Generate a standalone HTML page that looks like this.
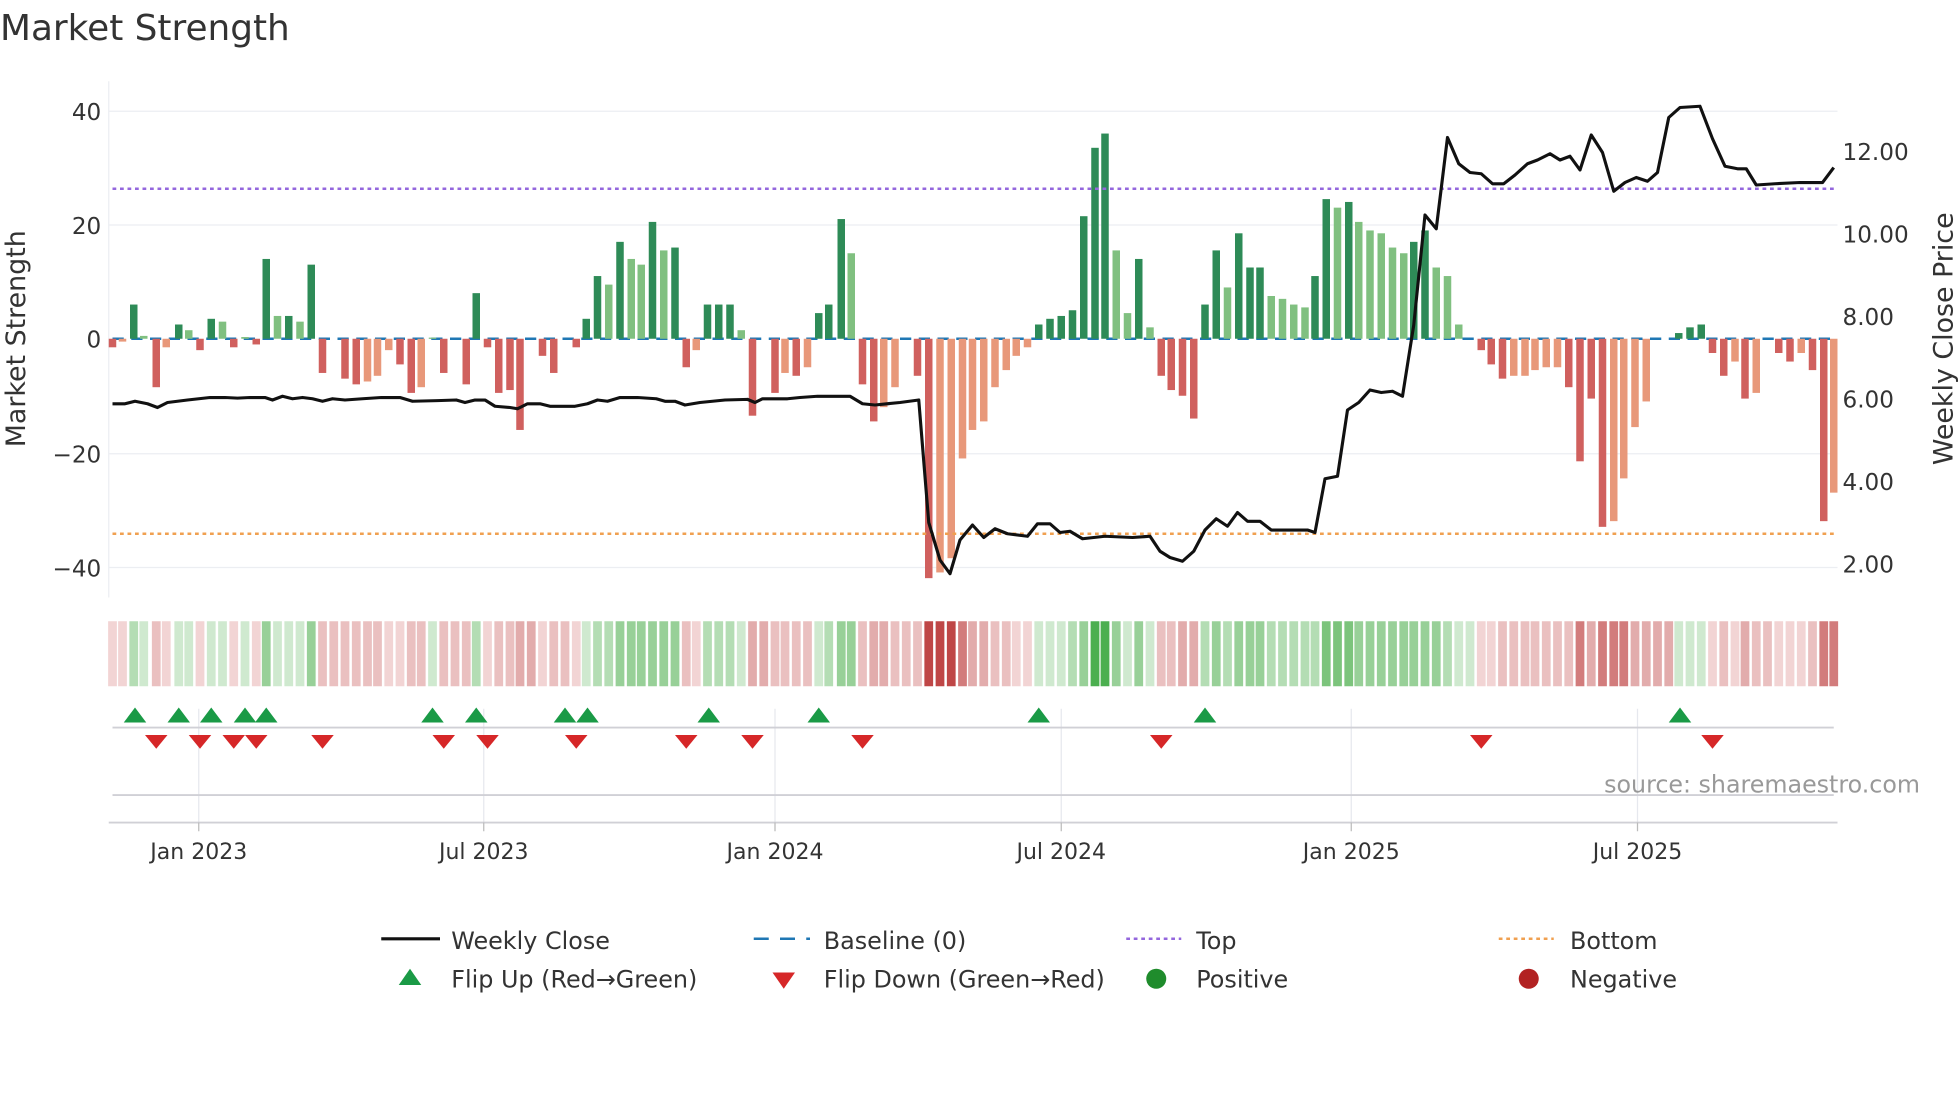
<!DOCTYPE html>
<html><head><meta charset="utf-8"><style>
html,body{margin:0;padding:0;background:#fff;width:1960px;height:1102px;overflow:hidden}
svg{display:block}
text{font-family:"DejaVu Sans","Liberation Sans",sans-serif;fill:#333}
</style></head><body>
<svg id="s" width="1960" height="1102" viewBox="0 0 1568 881.6" xmlns="http://www.w3.org/2000/svg">
<text x="0" y="32" font-size="28.7">Market Strength</text>
<g stroke="#eceef2" stroke-width="1">
<line x1="87" y1="89" x2="1470" y2="89"/><line x1="87" y1="180" x2="1470" y2="180"/>
<line x1="87" y1="363" x2="1470" y2="363"/><line x1="87" y1="454" x2="1470" y2="454"/>
<line x1="87" y1="65" x2="87" y2="478"/>
</g>
<g font-size="18.5" text-anchor="end">
<text x="81" y="96">40</text><text x="81" y="187">20</text><text x="81" y="278">0</text>
<text x="81" y="370">−20</text><text x="81" y="461">−40</text>
</g>
<g font-size="18.5">
<text x="1474" y="128">12.00</text><text x="1474" y="194">10.00</text><text x="1474" y="260">8.00</text>
<text x="1474" y="326">6.00</text><text x="1474" y="392">4.00</text><text x="1474" y="458">2.00</text>
</g>
<text font-size="21.5" text-anchor="middle" transform="translate(20,271) rotate(-90)">Market Strength</text>
<text font-size="21.5" text-anchor="middle" transform="translate(1562,271) rotate(-90)">Weekly Close Price</text>
<line x1="90" y1="271" x2="1467" y2="271" stroke="#1f77b4" stroke-width="2" stroke-dasharray="9,6"/>
<g id="bars"></g>
<line x1="90" y1="151" x2="1467" y2="151" stroke="#9467dd" stroke-width="2" stroke-dasharray="3,3"/>
<line x1="90" y1="427" x2="1467" y2="427" stroke="#f0a050" stroke-width="2" stroke-dasharray="3,3"/>
<polyline fill="none" stroke="#111" stroke-width="2.5" stroke-linejoin="round" points="90,323 100,323 108,321 118,323 126,326 134,322 150,320 168,318 180,318 190,318.5 200,318 212,318 218,320 226,317 234,319 242,318 250,319 258,321 266,319 276,320 290,319 305,318 320,318 330,321 350,320.5 365,320 372,322 380,320 388,320 396,325 408,326 414,327 422,323 432,323 440,325 460,325 470,323 478,320 486,321 496,318 510,318 525,319 532,321 540,321 548,324 560,322 580,320 598,319.5 604,322 610,319 630,319 640,318 654,317 680,317 690,323 700,324 720,322 735,320 743,418 752,448 760,459 768,432 778,420 787,430 796,423 806,427 822,429 830,419 840,419 848,426 856,425 866,431 884,429 906,430 920,429 928,441 936,446 946,449 955,441 964,424 973,415 982,421 990,410 998,417 1008,417 1017,424 1036,424 1046,424 1052,426 1060,383 1070,381 1078,328 1087,322 1096,312 1105,314 1114,313 1122,317 1131,260 1140,172 1149,183 1158,110 1167,131 1176,138 1185,139 1194,147 1203,147 1212,140 1222,131 1230,128 1240,123 1248,128 1256,125 1264,136 1273,108 1282,122 1291,153 1300,146 1309,142 1318,145 1326,138 1335,94 1344,86 1360,85 1370,111 1380,133 1390,135 1397,135 1405,148 1420,147 1440,146 1458,146 1467,134"/>
<g id="strip"></g>
<g stroke="#e6e8ee" stroke-width="1">
<line x1="159" y1="567" x2="159" y2="658"/><line x1="387" y1="567" x2="387" y2="658"/>
<line x1="620" y1="567" x2="620" y2="658"/><line x1="849" y1="567" x2="849" y2="658"/>
<line x1="1081" y1="567" x2="1081" y2="658"/><line x1="1310" y1="567" x2="1310" y2="658"/>
</g>
<line x1="90" y1="582" x2="1467" y2="582" stroke="#d0d0d6" stroke-width="1.5"/>
<line x1="90" y1="636" x2="1467" y2="636" stroke="#d0d0d6" stroke-width="1.5"/>
<line x1="87" y1="658" x2="1470" y2="658" stroke="#d0d0d6" stroke-width="1.5"/>
<g stroke="#bbb" stroke-width="1">
<line x1="159" y1="658" x2="159" y2="665"/><line x1="387" y1="658" x2="387" y2="665"/>
<line x1="620" y1="658" x2="620" y2="665"/><line x1="849" y1="658" x2="849" y2="665"/>
<line x1="1081" y1="658" x2="1081" y2="665"/><line x1="1310" y1="658" x2="1310" y2="665"/>
</g>
<g id="tri"></g>
<text x="1536" y="634" font-size="19" text-anchor="end" style="fill:#999">source: sharemaestro.com</text>
<g font-size="17.6" text-anchor="middle">
<text x="159" y="687">Jan 2023</text><text x="387" y="687">Jul 2023</text><text x="620" y="687">Jan 2024</text>
<text x="849" y="687">Jul 2024</text><text x="1081" y="687">Jan 2025</text><text x="1310" y="687">Jul 2025</text>
</g>
<g font-size="19.1">
<line x1="305" y1="751" x2="352" y2="751" stroke="#111" stroke-width="2.5"/>
<text x="361" y="759">Weekly Close</text>
<line x1="603" y1="751" x2="648" y2="751" stroke="#1f77b4" stroke-width="2" stroke-dasharray="12,9"/>
<text x="659" y="759">Baseline (0)</text>
<line x1="901" y1="751" x2="945" y2="751" stroke="#9467dd" stroke-width="2" stroke-dasharray="3,3"/>
<text x="957" y="759">Top</text>
<line x1="1199" y1="751" x2="1243" y2="751" stroke="#f0a050" stroke-width="2" stroke-dasharray="3,3"/>
<text x="1256" y="759">Bottom</text>
<polygon points="319,788 337,788 328,775" fill="#1a9a46"/>
<text x="361" y="790">Flip Up (Red→Green)</text>
<polygon points="618,778 636,778 627,791" fill="#d62728"/>
<text x="659" y="790">Flip Down (Green→Red)</text>
<circle cx="925" cy="783" r="8" fill="#1f8c2c"/>
<text x="957" y="790">Positive</text>
<circle cx="1223" cy="783" r="8" fill="#b22222"/>
<text x="1256" y="790">Negative</text>
</g>
</svg>
<script>
var D=[[90,-1.5,'R'],[98,-0.5,'S'],[107,6,'G'],[115,0.5,'L'],[125,-8.5,'R'],[133,-1.5,'S'],[143,2.5,'G'],[151,1.5,'L'],[160,-2,'R'],[169,3.5,'G'],[178,3,'L'],[187,-1.5,'R'],[196,0.3,'L'],[205,-1,'R'],[213,14,'G'],[222,4,'L'],[231,4,'G'],[240,3,'L'],[249,13,'G'],[258,-6,'R'],[267,0,'R'],[276,-7,'R'],[285,-8,'R'],[294,-7.5,'S'],[302,-6.5,'S'],[311,-2,'S'],[320,-4.5,'R'],[329,-9.5,'R'],[337,-8.5,'S'],[346,0.2,'L'],[355,-6,'R'],[364,0,'R'],[373,-8,'R'],[381,8,'G'],[390,-1.5,'R'],[399,-9.5,'R'],[408,-9,'R'],[416,-16,'R'],[425,0,'R'],[434,-3,'R'],[443,-6,'R'],[452,0,'R'],[461,-1.5,'R'],[469,3.5,'G'],[478,11,'G'],[487,9.5,'L'],[496,17,'G'],[505,14,'L'],[513,13,'L'],[522,20.5,'G'],[531,15.5,'L'],[540,16,'G'],[549,-5,'R'],[557,-2,'S'],[566,6,'G'],[575,6,'G'],[584,6,'G'],[593,1.5,'L'],[602,-13.5,'R'],[611,0,'R'],[620,-9.5,'R'],[628,-6,'S'],[637,-6.5,'R'],[646,-5,'S'],[655,4.5,'G'],[663,6,'G'],[673,21,'G'],[681,15,'L'],[690,-8,'R'],[699,-14.5,'R'],[707,-12,'S'],[716,-8.5,'S'],[725,0,'R'],[734,-6.5,'R'],[743,-42,'R'],[752,-41,'S'],[761,-38.5,'S'],[770,-21,'S'],[778,-16,'S'],[787,-14.5,'S'],[796,-8.5,'S'],[805,-5.5,'S'],[813,-3,'S'],[822,-1.5,'S'],[831,2.5,'G'],[840,3.5,'G'],[849,4,'G'],[858,5,'G'],[867,21.5,'G'],[876,33.5,'G'],[884,36,'G'],[893,15.5,'L'],[902,4.5,'L'],[911,14,'G'],[920,2,'L'],[929,-6.5,'R'],[937,-9,'R'],[946,-10,'R'],[955,-14,'R'],[964,6,'G'],[973,15.5,'G'],[982,9,'L'],[991,18.5,'G'],[1000,12.5,'G'],[1008,12.5,'G'],[1017,7.5,'L'],[1026,7,'L'],[1035,6,'L'],[1044,5.5,'L'],[1052,11,'G'],[1061,24.5,'G'],[1070,23,'L'],[1079,24,'G'],[1087,20.5,'L'],[1096,19,'L'],[1105,18.5,'L'],[1114,16,'L'],[1123,15,'L'],[1131,17,'G'],[1140,19,'G'],[1149,12.5,'L'],[1158,11,'L'],[1167,2.5,'L'],[1176,0,'L'],[1185,-2,'R'],[1193,-4.5,'R'],[1202,-7,'R'],[1211,-6.5,'S'],[1220,-6.5,'S'],[1228,-5.5,'S'],[1237,-5,'S'],[1246,-5,'S'],[1255,-8.5,'R'],[1264,-21.5,'R'],[1273,-10.5,'R'],[1282,-33,'R'],[1291,-32,'S'],[1299,-24.5,'S'],[1308,-15.5,'S'],[1317,-11,'S'],[1326,0,'S'],[1335,0,'S'],[1343,1,'G'],[1352,2,'G'],[1361,2.5,'G'],[1370,-2.5,'R'],[1379,-6.5,'R'],[1388,-4,'S'],[1396,-10.5,'R'],[1405,-9.5,'S'],[1414,0,'R'],[1423,-2.5,'R'],[1432,-4,'R'],[1441,-2.5,'S'],[1450,-5.5,'R'],[1459,-32,'R'],[1467,-27,'S']];
var C={G:'#2e8b57',L:'#80c080',R:'#d0605e',S:'#e8987a'};
var NS='http://www.w3.org/2000/svg';
function r(g,x,y,w,h,f){var e=document.createElementNS(NS,'rect');e.setAttribute('x',x);e.setAttribute('y',y);e.setAttribute('width',w);e.setAttribute('height',h);e.setAttribute('fill',f);g.appendChild(e);}
var B=document.getElementById('bars'),S=document.getElementById('strip');
var prev='#f0d2d2';
D.forEach(function(d){var x=d[0]-3,v=d[1],h=Math.abs(v)*4.56;
 if(Math.abs(v)>0.05){r(B,x,v>0?271-h:271,6,Math.max(h,1),C[d[2]]);}
 var c=prev,a=Math.abs(v);
 if(v>0.1){c=a<5?'#cfe9cf':a<12?'#b4ddb4':a<22?'#98d098':a<30?'#7cc47c':'#4caf50';}
 else if(v<-0.1){c=a<5?'#f2d4d4':a<10?'#eac0c0':a<20?'#e2acac':a<35?'#d27c7c':'#bf4646';}
 prev=c;r(S,d[0]-3.5,497,7,52,c);});
var T=document.getElementById('tri');
[108,143,169,196,213,346,381,452,470,567,655,831,964,1344].forEach(function(x){var p=document.createElementNS(NS,'polygon');p.setAttribute('points',(x-9)+',578 '+(x+9)+',578 '+x+',566');p.setAttribute('fill','#1a9a46');T.appendChild(p);});
[125,160,187,205,258,355,390,461,549,602,690,929,1185,1370].forEach(function(x){var p=document.createElementNS(NS,'polygon');p.setAttribute('points',(x-9)+',588 '+(x+9)+',588 '+x+',599');p.setAttribute('fill','#d62728');T.appendChild(p);});
</script>
</body></html>
